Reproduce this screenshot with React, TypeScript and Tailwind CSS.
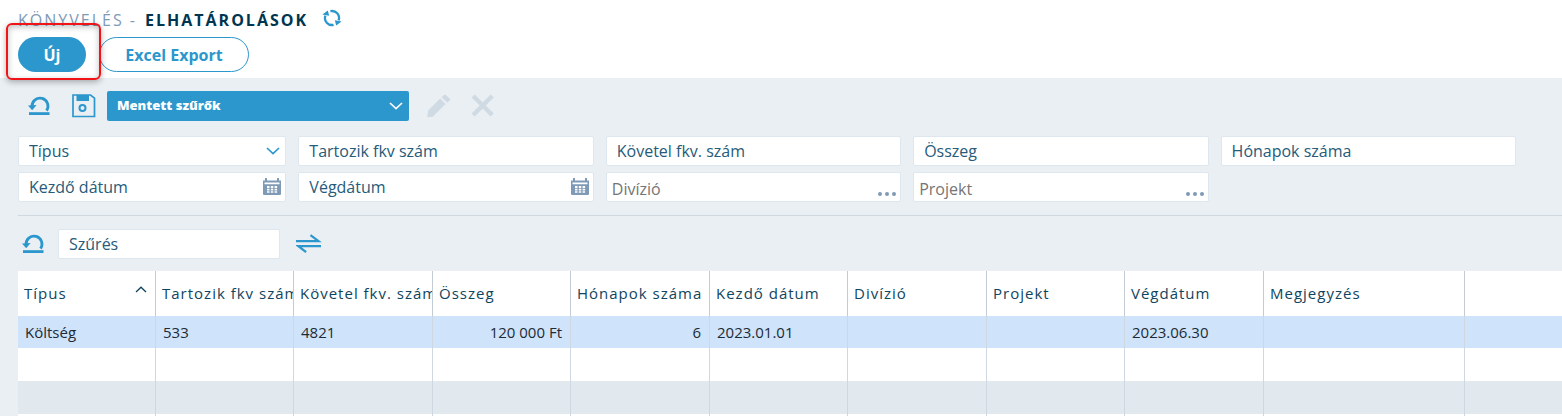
import { useState } from 'react'
import type { ReactNode } from 'react'

interface Column {
  key: string
  label: string
  width?: number
  align?: 'right'
}

const columns: Column[] = [
  { key: 'tipus', label: 'Típus', width: 138 },
  { key: 'tartozik', label: 'Tartozik fkv szám', width: 138 },
  { key: 'kovetel', label: 'Követel fkv. szám', width: 139 },
  { key: 'osszeg', label: 'Összeg', width: 138, align: 'right' },
  { key: 'honapok', label: 'Hónapok száma', width: 139, align: 'right' },
  { key: 'kezdo', label: 'Kezdő dátum', width: 138 },
  { key: 'divizio', label: 'Divízió', width: 139 },
  { key: 'projekt', label: 'Projekt', width: 138 },
  { key: 'veg', label: 'Végdátum', width: 139 },
  { key: 'megjegyzes', label: 'Megjegyzés', width: 201 },
  { key: 'rest', label: '' },
]

const rows: Record<string, string>[] = [
  {
    tipus: 'Költség',
    tartozik: '533',
    kovetel: '4821',
    osszeg: '120 000 Ft',
    honapok: '6',
    kezdo: '2023.01.01',
    veg: '2023.06.30',
  },
  {},
  {},
  {},
]

const rowStyles = ['h-8 bg-[#cfe3fa]', 'h-[33px] bg-white', 'h-[33px] bg-[#e1e8ee]', 'h-[33px] bg-white']

function RefreshIcon() {
  return (
    <svg width="20" height="18" viewBox="0 0 20 18" fill="none" stroke="currentColor" strokeWidth="2.3">
      <path d="M8.4 2.2A7 7 0 0 1 16.6 11.4" />
      <path d="M11.6 15.8A7 7 0 0 1 3.4 6.6" />
      <path d="M12.8 11.2l6.8 1.2-5.4 4zM7.2 6.8L0.4 5.6l5.4-4z" fill="currentColor" stroke="none" />
    </svg>
  )
}

function ResetIcon() {
  return (
    <svg width="24" height="22" viewBox="0 0 24 22" fill="none" stroke="currentColor">
      <path d="M4 11.4a8 8 0 1 1 14.6 4.2" strokeWidth="2.8" />
      <path d="M0 10.6l8.6-.6-4.4 5.2z" fill="currentColor" stroke="none" />
      <path d="M1 18.6h20.5" strokeWidth="2.8" />
    </svg>
  )
}

function SaveIcon() {
  return (
    <svg width="24" height="24" viewBox="0 0 24 24" fill="none" stroke="currentColor">
      <path d="M1 1h17.5l4 3.2v18.3H1z" strokeWidth="1.7" />
      <path d="M4.5 1H17v6H4.5z" fill="currentColor" stroke="none" />
      <circle cx="10.5" cy="14" r="3" strokeWidth="2" />
    </svg>
  )
}

function PencilIcon() {
  return (
    <svg width="24" height="24" viewBox="0 0 24 24" fill="currentColor">
      <path d="M0.2 23.2l1-6.6L13.2 4.6l5.4 5.4L7 21.6l-1.6 1.2z" />
      <path d="M14.7 3.2l2.2-2.3a1.4 1.4 0 0 1 2 0l3.7 3.7a1.4 1.4 0 0 1 0 2l-2.3 2.2z" />
    </svg>
  )
}

function CrossIcon() {
  return (
    <svg width="24" height="24" viewBox="0 0 24 24" stroke="currentColor" strokeWidth="4.4">
      <path d="M2.2 2l19 19M21.2 2l-19 19" />
    </svg>
  )
}

function ChevronIcon() {
  return (
    <svg width="14" height="8" viewBox="0 0 14 8" fill="none" stroke="currentColor" strokeWidth="1.7">
      <path d="M1 1l6 5.6L13 1" />
    </svg>
  )
}

function CalendarIcon() {
  return (
    <svg width="18" height="17" viewBox="0 0 18 17" fill="currentColor">
      <path d="M0 2.5h2V0h2v2.5h10V0h2v2.5h2V16a1 1 0 0 1-1 1H1a1 1 0 0 1-1-1z" />
      <path
        d="M1.5 4.5h15v1.7h-15zM4 8h2.5v2H4zM7.8 8h2.5v2H7.8zM11.6 8h2.5v2h-2.5zM4 10.8h2.5v1.6H4zM7.8 10.8h2.5v1.6H7.8zM11.6 10.8h2.5v1.6h-2.5zM4 13.2h2.5v1.6H4zM7.8 13.2h2.5v1.6H7.8zM11.6 13.2h2.5v1.6h-2.5z"
        fill="#fff"
      />
    </svg>
  )
}

function DotsIcon() {
  return (
    <svg width="18" height="4" viewBox="0 0 18 4" fill="currentColor">
      <circle cx="2" cy="2" r="2" />
      <circle cx="9" cy="2" r="2" />
      <circle cx="16" cy="2" r="2" />
    </svg>
  )
}

function SwapIcon() {
  return (
    <svg width="26" height="20" viewBox="0 0 26 20" fill="none" stroke="currentColor" strokeWidth="2.2">
      <path d="M0 7.2h22.5L14.5 1.2" />
      <path d="M25 12.2H2.5l7.6 6" />
    </svg>
  )
}

interface FieldProps {
  label: string
  lookup?: boolean
  children?: ReactNode
}

function Field({ label, lookup, children }: FieldProps) {
  return (
    <div className="flex h-[30px] rounded-xs border border-[#dfe7ee] bg-white">
      <input
        aria-label={label}
        placeholder={label}
        className={`min-w-0 flex-1 bg-transparent outline-none ${
          lookup
            ? 'pt-[3px] pl-[5px] placeholder:text-[#757575]'
            : 'pl-2.5 placeholder:text-[#265b7a]'
        }`}
      />
      {children}
    </div>
  )
}

function CalendarButton() {
  return (
    <button aria-label="Naptár" className="px-1 pb-0.5 text-[#7f9ab7]">
      <CalendarIcon />
    </button>
  )
}

function LookupButton() {
  return (
    <button aria-label="Keresés" className="flex items-end px-1 pb-[5px] text-[#7f9ab7]">
      <DotsIcon />
    </button>
  )
}

export default function App() {
  const [filter, setFilter] = useState('')

  return (
    <div className="flex h-screen flex-col overflow-hidden bg-[#eaeff3] font-['Open_Sans',sans-serif] text-[#265b7a]">
      <header className="bg-white px-[18px] pt-2 pb-1.5">
        <div className="flex h-6 items-center">
          <h1 className="flex gap-2 text-base tracking-[2px]">
            <span className="font-normal text-[#7f9ab7]">KÖNYVELÉS -</span>
            <span className="font-bold text-[#00354f]">ELHATÁROLÁSOK</span>
          </h1>
          <button aria-label="Frissítés" className="ml-3.5 pb-1 text-[#2c97cc]">
            <RefreshIcon />
          </button>
        </div>
        <div className="mt-[5px] flex gap-[13px] text-base font-bold">
          <div className="relative z-10">
            <button className="h-[35px] w-[68px] rounded-full bg-[#2c97cc] text-white">Új</button>
            <div className="pointer-events-none absolute -top-3.5 -right-[15px] -bottom-2 -left-3 rounded-md border-2 border-[#f01418] shadow-[0_2px_6px_rgba(0,0,0,0.3),inset_0_2px_6px_rgba(0,0,0,0.25)]" />
          </div>
          <button className="h-[35px] w-[150px] rounded-full border border-[#2c97cc] bg-white text-[#2c97cc]">
            Excel Export
          </button>
        </div>
      </header>

      <section className="ml-[18px] border-b border-[#d0d9e0] pt-[13px] pb-[13px]">
        <div className="flex items-center text-[#2c97cc]">
          <button aria-label="Szűrők törlése" className="ml-2.5">
            <ResetIcon />
          </button>
          <button aria-label="Szűrő mentése" className="ml-5">
            <SaveIcon />
          </button>
          <div className="relative ml-[11px] w-[302px] text-white">
            <select
              aria-label="Mentett szűrők"
              className="h-[30px] w-full appearance-none rounded-xs bg-[#2c97cc] px-2.5 text-[13px] font-extrabold outline-none"
            >
              <option>Mentett szűrők</option>
            </select>
            <div className="pointer-events-none absolute inset-y-0 right-1.5 flex items-center">
              <ChevronIcon />
            </div>
          </div>
          <button aria-label="Szerkesztés" disabled className="ml-[18px] text-[#d0dae3]">
            <PencilIcon />
          </button>
          <button aria-label="Törlés" disabled className="ml-5 text-[#d0dae3]">
            <CrossIcon />
          </button>
        </div>

        <div className="mt-[15px] mr-[46px] grid grid-cols-[268fr_295fr_295fr_295fr_295fr] gap-x-3 gap-y-1.5 text-base">
          <div className="relative">
            <select
              aria-label="Típus"
              className="h-[30px] w-full appearance-none rounded-xs border border-[#dfe7ee] bg-white px-2.5 outline-none"
            >
              <option>Típus</option>
            </select>
            <div className="pointer-events-none absolute inset-y-0 right-1.5 flex items-center text-[#2c97cc]">
              <ChevronIcon />
            </div>
          </div>
          <Field label="Tartozik fkv szám" />
          <Field label="Követel fkv. szám" />
          <Field label="Összeg" />
          <Field label="Hónapok száma" />
          <Field label="Kezdő dátum">
            <CalendarButton />
          </Field>
          <Field label="Végdátum">
            <CalendarButton />
          </Field>
          <Field label="Divízió" lookup>
            <LookupButton />
          </Field>
          <Field label="Projekt" lookup>
            <LookupButton />
          </Field>
        </div>
      </section>

      <div className="ml-[18px] flex items-center pt-[13px] pb-3 text-[#2c97cc]">
        <button aria-label="Rendezés törlése" className="ml-1">
          <ResetIcon />
        </button>
        <input
          aria-label="Szűrés"
          placeholder="Szűrés"
          value={filter}
          onChange={(e) => setFilter(e.target.value)}
          className="ml-3 h-[30px] w-[222px] rounded-xs border border-[#dfe7ee] bg-white px-2.5 text-base outline-none placeholder:text-[#265b7a]"
        />
        <button aria-label="Csere" className="ml-4">
          <SwapIcon />
        </button>
      </div>

      <div className="ml-[18px] min-h-0 flex-1 overflow-hidden">
        <table className="w-full table-fixed border-separate border-spacing-0">
          <colgroup>
            {columns.map((col) => (
              <col key={col.key} style={{ width: col.width }} />
            ))}
          </colgroup>
          <thead>
            <tr className="h-[45px] bg-white text-left text-[15px] text-[#0f4560]">
              {columns.map((col, index) => (
                <th
                  key={col.key}
                  className="overflow-hidden border-r border-[#c3ccd4] p-0 pl-1.5 font-normal tracking-[1px] whitespace-nowrap last:border-r-0"
                >
                  {index === 0 ? (
                    <div className="flex items-center justify-between pr-2">
                      {col.label}
                      <svg width="12" height="7" viewBox="0 0 12 7" fill="none" stroke="currentColor" strokeWidth="1.3" className="mb-2">
                        <path d="M1 6l5-4.8L11 6" />
                      </svg>
                    </div>
                  ) : (
                    col.label
                  )}
                </th>
              ))}
            </tr>
          </thead>
          <tbody>
            {rows.map((row, index) => (
              <tr key={index} className={`text-[15px] text-[#1c2b36] ${rowStyles[index]}`}>
                {columns.map((col) => (
                  <td
                    key={col.key}
                    className={`border-r border-[#cfd8e1] py-0 pr-2 pl-[7px] whitespace-nowrap last:border-r-0 ${
                      col.align === 'right' ? 'text-right' : ''
                    }`}
                  >
                    {row[col.key]}
                  </td>
                ))}
              </tr>
            ))}
          </tbody>
        </table>
      </div>
    </div>
  )
}
